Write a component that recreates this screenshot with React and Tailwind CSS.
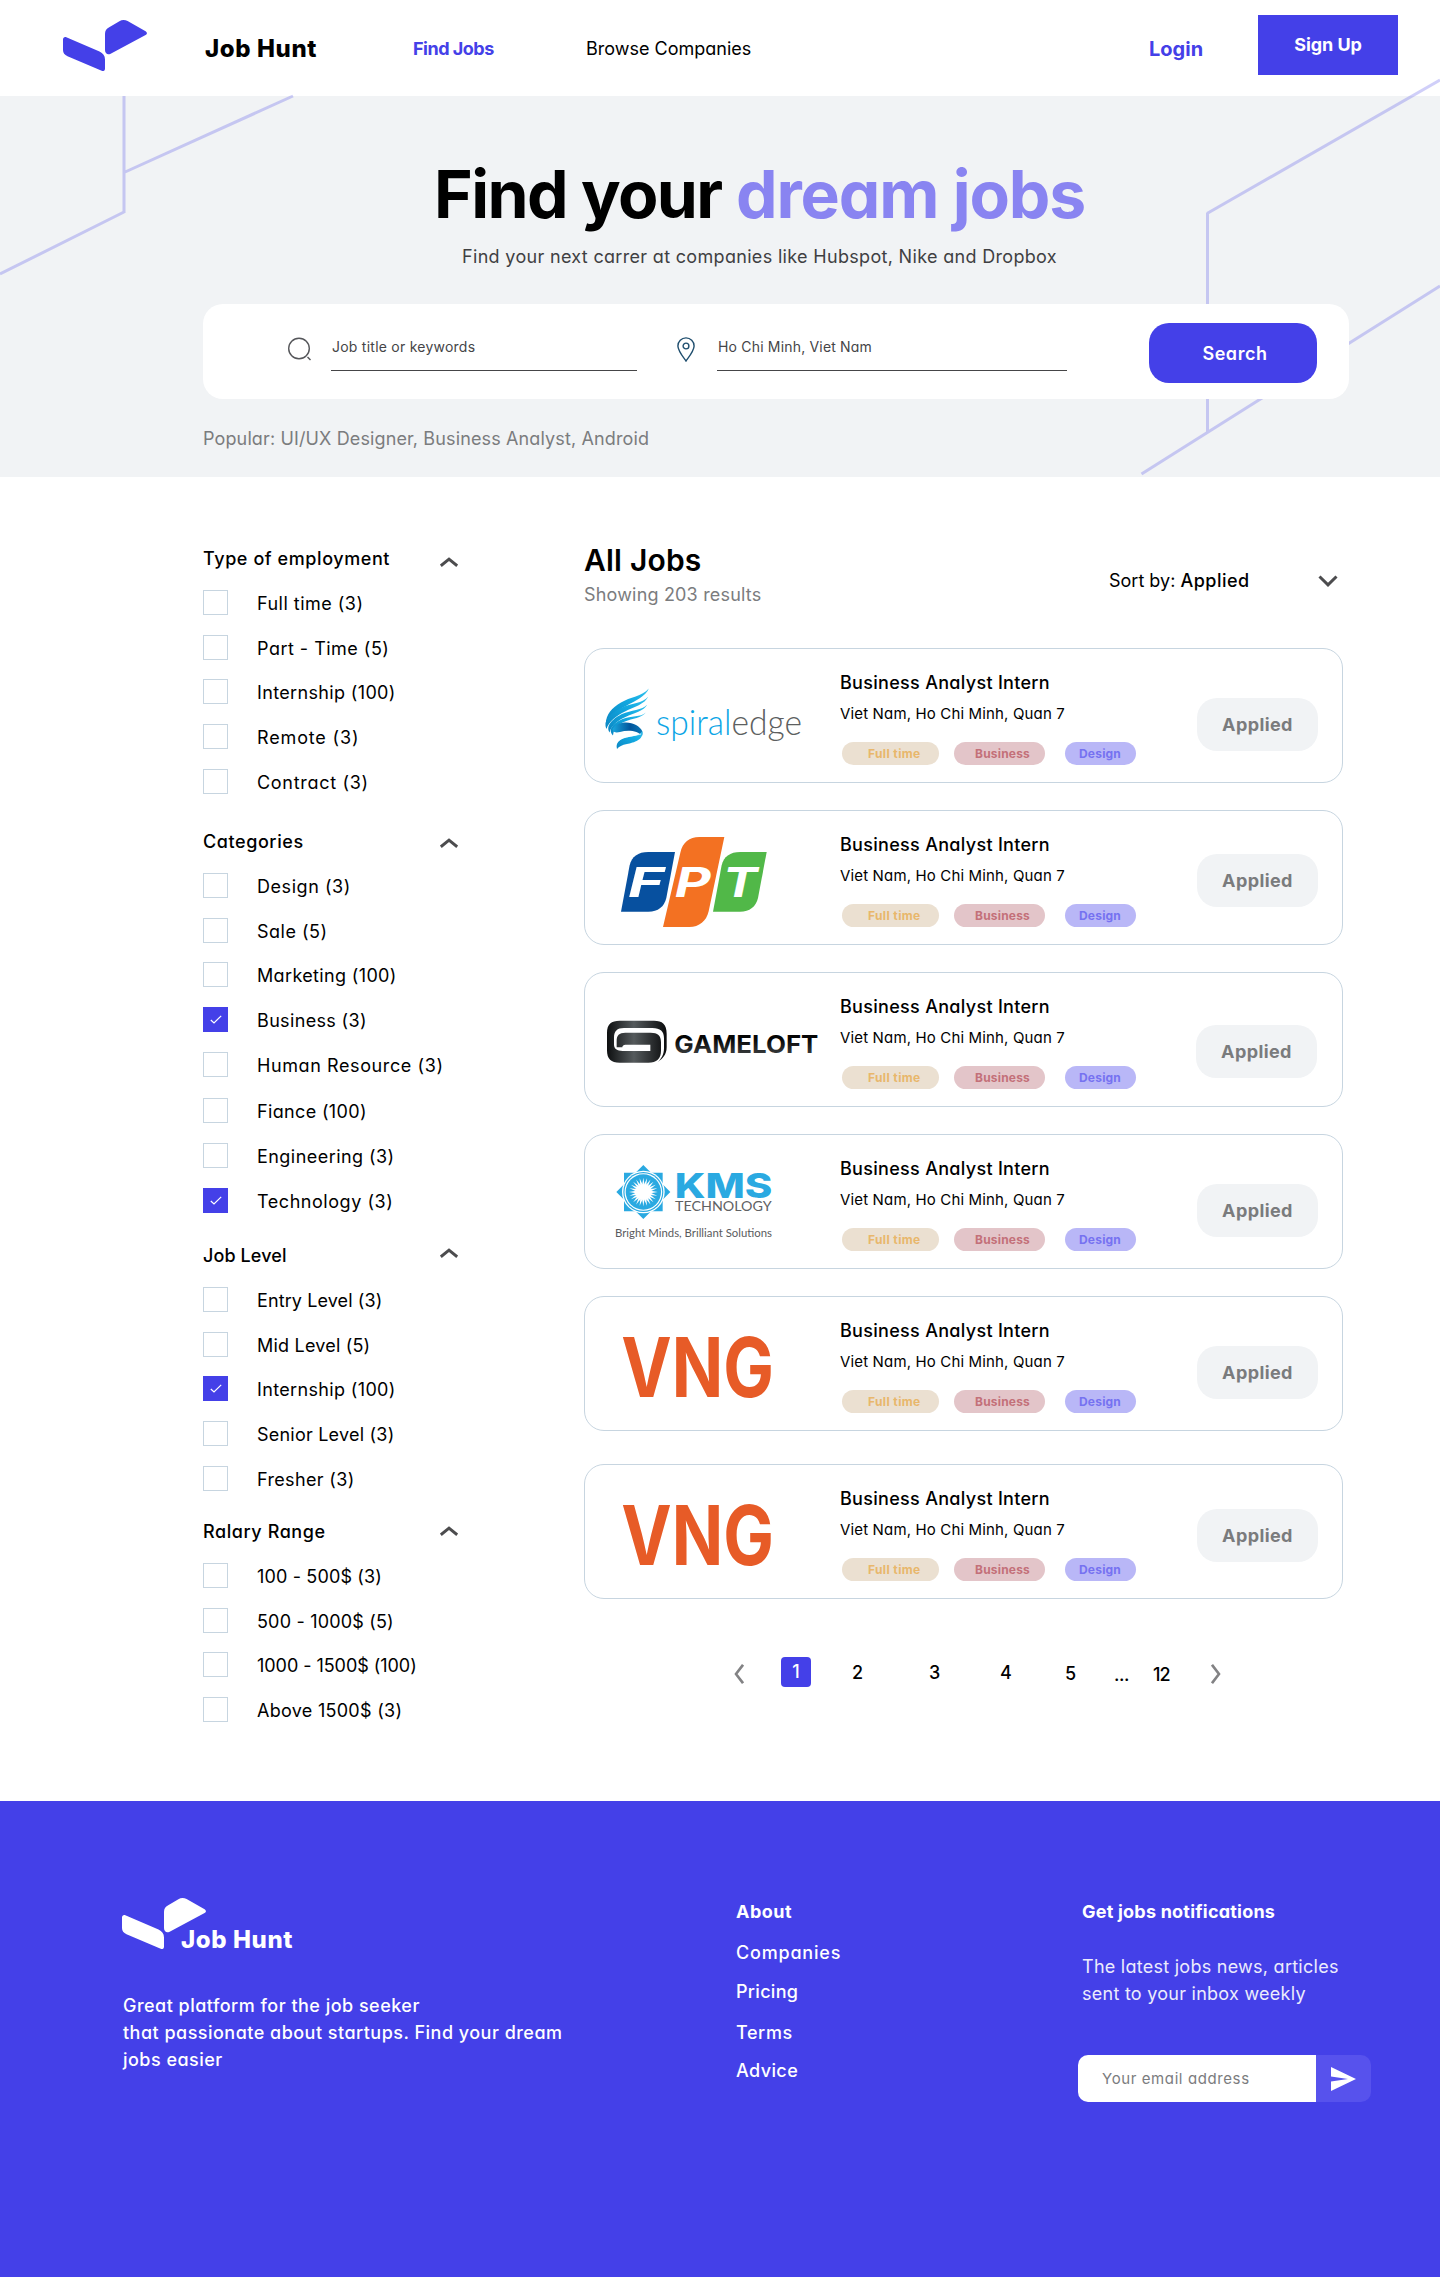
import React from "react";

const jobs = [
  { logo: "spiraledge", gap: "", button: "mt-[49px] ml-0" },
  { logo: "fpt", gap: "mt-[27px]", button: "mt-[43px] ml-0" },
  { logo: "gameloft", gap: "mt-[27px]", button: "mt-[52px] -ml-px" },
  { logo: "kms", gap: "mt-[27px]", button: "mt-[49px] ml-0" },
  { logo: "vng", gap: "mt-[27px]", button: "mt-[49px] ml-0" },
  { logo: "vng", gap: "mt-[33px]", button: "mt-[44px] ml-0" },
];

const groups = [
  {
    title: "Type of employment",
    chevron: "mt-[12px]",
    items: [
      { label: "Full time (3)", row: "h-[45px]", spacing: "tracking-[0.480px]" },
      { label: "Part - Time (5)", row: "h-[44px]", spacing: "tracking-[0.480px]" },
      { label: "Internship (100)", row: "h-[45px]" },
      { label: "Remote (3)", row: "h-[45px]", spacing: "tracking-[0.850px]" },
      { label: "Contract (3)", row: "h-[59px]", spacing: "tracking-[0.700px]" },
    ],
  },
  {
    title: "Categories",
    chevron: "mt-[10px]",
    items: [
      { label: "Design (3)", row: "h-[45px]", spacing: "tracking-[0.550px]" },
      { label: "Sale (5)", row: "h-[44px]", spacing: "tracking-[0.500px]" },
      { label: "Marketing (100)", row: "h-[45px]" },
      { label: "Business (3)", row: "h-[45px]", checked: true },
      { label: "Human Resource (3)", row: "h-[46px]", spacing: "tracking-[0.600px]" },
      { label: "Fiance (100)", row: "h-[45px]" },
      { label: "Engineering (3)", row: "h-[45px]", spacing: "tracking-[0.450px]" },
      { label: "Technology (3)", row: "h-[54px]", checked: true, spacing: "tracking-[0.550px]" },
    ],
  },
  {
    title: "Job Level",
    titleSpacing: "tracking-[0.100px]",
    chevron: "mt-[6px]",
    items: [
      { label: "Entry Level (3)", row: "h-[45px]", spacing: "tracking-[0.100px]" },
      { label: "Mid Level (5)", row: "h-[44px]", spacing: "tracking-[0.200px]" },
      { label: "Internship (100)", row: "h-[45px]", checked: true },
      { label: "Senior Level (3)", row: "h-[45px]", spacing: "tracking-[0.220px]" },
      { label: "Fresher (3)", row: "h-[52px]" },
    ],
  },
  {
    title: "Ralary Range",
    chevron: "mt-[8px]",
    items: [
      { label: "100 - 500$ (3)", row: "h-[45px]", spacing: "tracking-[0.150px]" },
      { label: "500 - 1000$ (5)", row: "h-[44px]", spacing: "tracking-[0.180px]" },
      { label: "1000 - 1500$ (100)", row: "h-[45px]", spacing: "tracking-[-0.050px]" },
      { label: "Above 1500$ (3)", row: "h-[45px]", spacing: "tracking-[0.280px]" },
    ],
  },
];

function BrandMark({ className }) {
  return (
    <svg viewBox="0 0 84 51" className={className} fill="currentColor">
      <path d="M0 19.5C0 17.6 1.6 16.4 3.3 17.2L36.5 31.4C40 33 42 35.5 42 39.5V48.5C42 50.6 40.5 51.6 38.7 50.8L4.5 36.2C1.5 34.8 0 33 0 30Z" />
      <path d="M42 14C42 10.5 43.3 8.8 46.2 7.2L56.4 1.2C59 -.3 62 -.3 64.6 1.1L82.6 11.2C84.4 12.3 84.4 14 82.6 15L47.2 33.9C44.4 35.3 42 33.2 42 30Z" />
    </svg>
  );
}

function Chevron({ className, d, box, width = 3 }) {
  return (
    <svg viewBox={box} className={className} fill="none" stroke="currentColor" strokeWidth={width}>
      <path d={d} />
    </svg>
  );
}

function SpiraledgeLogo() {
  return (
    <svg viewBox="1 1 255 133" className="h-[133px] w-[255px]">
      <defs>
        <linearGradient id="wing" x1="0" y1="1" x2="1" y2="0">
          <stop offset="0" stopColor="#0b86c3" />
          <stop offset="0.6" stopColor="#12a9e1" />
          <stop offset="1" stopColor="#35c3ee" />
        </linearGradient>
        <linearGradient id="band" x1="0" y1="0" x2="1" y2="0">
          <stop offset="0" stopColor="#1aa6de" />
          <stop offset="0.6" stopColor="#02559b" />
          <stop offset="1" stopColor="#0a78b8" />
        </linearGradient>
      </defs>
      <g fill="url(#wing)">
        <path d="M64.8 40.5C62 48 51 53 42 58C34 62 26 68 21.8 76C22 66 28 60 37 54.500C46 49 58 48.500 64.800 40.500Z" />
        <path d="M64.300 48.500C61 56 50 59 41 63.500C33 67.500 25 73 22.500 81C18.500 72 28 64.500 37 60C47 55 59 55.500 64.300 48.500Z" />
        <path d="M63.300 56.500C60 63 50 65 41.500 69C34 72.500 27.500 77 25.500 84.500C21 77 30 70 38 66C47 62 58 62.500 63.300 56.500Z" />
        <path d="M61.800 64.500C58 70 48 70.500 41 73.500C35 76 30 79 29 87.500C23 81 30.500 74.500 38.500 71C47 67.500 57 69.500 61.800 64.500Z" />
      </g>
      <path d="M28.500 81C33 73.500 45 73 52 77C58 80.500 59.500 84 58 88C54 82.500 44 81.500 36 84C32 85 29 84.500 28.500 81Z" fill="url(#band)" />
      <path d="M58.300 83C60 92 50 94.500 43 96C38 97 35 98.500 33 101C31.500 95 35 91.500 42 89.500C49 88 56 87.500 58.300 83Z" fill="url(#wing)" />
      <path d="M32.500 95C36 88.500 48 88.500 57 86" fill="none" stroke="#fff" strokeWidth=".8" />
      <text x="72" y="87" textLength="146" lengthAdjust="spacingAndGlyphs" className="fill-[#0ba5e6] font-['Lato'] text-[35px] font-light">
        spiral<tspan className="fill-[#5d5f61]">edge</tspan>
      </text>
    </svg>
  );
}

function FptLogo() {
  return (
    <svg viewBox="15 33 765 399" className="h-[133px] w-[255px]">
      <path d="M123 335L149 196C155 170 174 156 205 156H285L259 294C253 320 234 335 205 335Z" fill="#07509f" />
      <path d="M249 381L301 158C308 127 328 111 358 111H433L386 334C379 364 358 381 328 381Z" fill="#f37122" />
      <path d="M399 335L425 196C431 170 450 156 481 156H560L534 294C528 320 509 335 480 335Z" fill="#51b848" />
      <g className="fill-white font-['Inter'] text-[122px] font-bold italic">
        <text x="144" y="290" textLength="108" lengthAdjust="spacingAndGlyphs">F</text>
        <text x="284" y="290" textLength="108" lengthAdjust="spacingAndGlyphs">P</text>
        <text x="428" y="290" textLength="104" lengthAdjust="spacingAndGlyphs">T</text>
      </g>
    </svg>
  );
}

function GameloftLogo() {
  return (
    <svg viewBox="15 519 765 399" className="h-[133px] w-[255px]">
      <defs>
        <linearGradient id="steel" x1="0" y1="0" x2="1" y2="0">
          <stop offset="0" stopColor="#0d0f10" />
          <stop offset="0.45" stopColor="#555a5c" />
          <stop offset="1" stopColor="#0a0b0c" />
        </linearGradient>
        <linearGradient id="ink" x1="0" y1="0" x2="0" y2="1">
          <stop offset="0.3" stopColor="#050505" />
          <stop offset="1" stopColor="#4a4e50" />
        </linearGradient>
      </defs>
      <path
        d="M233 787C247 776 260 765 260 742V701C260 672 247 662 222 662H119C94 662 81 672 81 699V751C81 778 93 788 119 788H205C230 788 243 776 243 752V727C243 706 233 698 212 698H136C117 698 110 706 110 722V742H127C127 737 131 734 136 734H211V753H128C111 753 102 747 102 733V714C102 693 111 684 132 684H217C241 684 252 694 252 715V744C252 765 243 776 233 787Z"
        fill="url(#steel)"
        fillRule="evenodd"
      />
      <text x="283" y="760" textLength="432" lengthAdjust="spacingAndGlyphs" fill="url(#ink)" className="font-['Inter'] text-[72px] font-bold">
        GAMELOFT
      </text>
    </svg>
  );
}

function KmsLogo() {
  const rays = Array.from({ length: 24 }, (_, i) => i * 15);
  return (
    <svg viewBox="15 15 765 399" className="h-[133px] w-[255px]">
      <g transform="translate(190 186)">
        <path d="M-58-58H58V58H-58Z M0-81L81 0L0 81L-81 0Z" fill="#2aa9e1" />
        <circle r="64" fill="#fff" />
        <circle r="60" fill="#2aa9e1" />
        <circle r="56.500" fill="#fff" />
        <circle r="53" fill="#2aa9e1" />
        <circle r="24" fill="#fff" />
        {rays.map((angle) => (
          <path key={angle} d="M-3.500-22L0-43L3.500-22Z" fill="#fff" transform={`rotate(${angle})`} />
        ))}
      </g>
      <text x="284" y="204" textLength="293" lengthAdjust="spacingAndGlyphs" className="fill-[#2aa9e1] font-['Inter'] text-[102px] font-extrabold">
        KMS
      </text>
      <text x="285" y="244" textLength="290" lengthAdjust="spacingAndGlyphs" className="fill-[#606163] font-['Lato'] text-[38px]">
        TECHNOLOGY
      </text>
      <text x="105" y="321" textLength="471" lengthAdjust="spacingAndGlyphs" className="fill-[#5a5b5d] font-['Lato'] text-[37px]">
        Bright Minds, Brilliant Solutions
      </text>
    </svg>
  );
}

function VngLogo() {
  return (
    <svg viewBox="15 501 765 399" className="h-[133px] w-[255px]">
      <text x="124" y="801" textLength="458" lengthAdjust="spacingAndGlyphs" className="fill-[#e75b27] font-['Inter'] text-[247px] font-bold">
        VNG
      </text>
    </svg>
  );
}

const logos = {
  spiraledge: SpiraledgeLogo,
  fpt: FptLogo,
  gameloft: GameloftLogo,
  kms: KmsLogo,
  vng: VngLogo,
};

function Header() {
  return (
    <header className="flex h-24 items-start pl-[63px]">
      <BrandMark className="mt-5 h-[51px] w-[84px] shrink-0 text-[#4440e8]" />
      <div className="mt-[31px] ml-[58px] w-[208px] text-2xl leading-9 font-extrabold tracking-[0.600px]">Job Hunt</div>
      <nav className="mt-[35px] flex text-lg leading-[27px]">
        <a className="w-[173px] font-bold tracking-[-0.500px] text-[#4440e8]">Find Jobs</a>
        <a className="w-[563px]">Browse Companies</a>
      </nav>
      <a className="mt-[34px] w-[109px] text-xl leading-[30px] font-bold text-[#4440e8]">Login</a>
      <button className="mt-[15px] h-[60px] w-[140px] bg-[#4440e8] pb-[2px] text-lg leading-[27px] font-bold tracking-[-0.050px] text-white">Sign Up</button>
    </header>
  );
}

function Hero() {
  return (
    <section className="h-[381px] bg-[#f1f3f5]">
      <svg viewBox="0 0 1440 477" className="pointer-events-none absolute top-0 left-0 h-[477px] w-[1440px]" fill="none" stroke="#4440e8" strokeOpacity=".25" strokeWidth="3">
        <path d="M124 96V213M124 172.500L293 96M124 212L0 274" />
        <path d="M1207.500 213V432M1207 213.500L1440 80M1141.500 474L1440 286" />
      </svg>
      <h1 className="pt-[56px] pl-[434px] text-[66px] leading-[84px] font-bold whitespace-nowrap">
        <span className="inline-block w-[302px] tracking-[-1.600px]">Find your</span>
        <span className="tracking-[-1.150px] text-[#8984f1]">dream jobs</span>
      </h1>
      <p className="mt-[7px] pl-[462px] text-lg leading-[27px] tracking-[0.320px] text-[#3f4042]">
        Find your next carrer at companies like Hubspot, Nike and Dropbox
      </p>
      <div className="relative mt-[34px] ml-[203px] flex h-[95px] w-[1146px] items-start rounded-[20px] bg-white pl-[85px] text-sm leading-[21px] text-[#454547]">
        <svg viewBox="0 0 24 24" className="mt-[33px] h-6 w-6" fill="none" stroke="#55565a" strokeWidth="1.400">
          <circle cx="11" cy="11.500" r="10.300" />
          <path d="M19.500 20L22.500 23" />
        </svg>
        <div className="ml-[19px] h-[67px] w-[306px] border-b border-[#454547] pt-[32px] tracking-[0.240px]">
          <span className="pl-[1px]">Job title or keywords</span>
        </div>
        <svg viewBox="0 0 18 25" className="mt-[33px] ml-[40px] h-[25px] w-[18px]" fill="none" stroke="#1f4e6e" strokeWidth="1.400">
          <path d="M9 24C5 18.500 .9 13.500 .9 9A8.100 8.100 0 0 1 17.100 9C17.100 13.500 13 18.500 9 24Z" />
          <circle cx="9" cy="9" r="2.900" />
        </svg>
        <div className="ml-[22px] h-[67px] w-[350px] border-b border-[#454547] pt-[32px] tracking-[0.180px]">
          <span className="pl-[1px]">Ho Chi Minh, Viet Nam</span>
        </div>
        <button className="mt-[19px] ml-[82px] h-[60px] w-[168px] rounded-[20px] bg-[#4440e8] pt-[1px] pl-[4px] text-lg font-semibold tracking-[0.550px] text-white">Search</button>
      </div>
      <p className="mt-[26px] pl-[203px] text-lg leading-[27px] tracking-[0.130px] text-[#7b7c7e]">Popular: UI/UX Designer, Business Analyst, Android</p>
    </section>
  );
}

function Filters() {
  return (
    <aside className="w-[381px] shrink-0 pt-[68px] text-lg leading-[27px]">
      {groups.map((group) => (
        <section key={group.title}>
          <h2 className={`flex h-[45px] w-[255px] justify-between font-medium ${group.titleSpacing || "tracking-[0.580px]"}`}>
            {group.title}
            <Chevron box="0 0 18 10" d="M.8 8.800L9 2.200L17.200 8.800" className={`${group.chevron} h-[10px] w-[18px] text-[#4c4c4e]`} width={3} />
          </h2>
          {group.items.map((item) => (
            <label key={item.label} className={`${item.row} flex items-start`}>
              {item.checked ? (
                <span className="flex h-[25px] w-[25px] items-center justify-center bg-[#4440e8]">
                  <svg viewBox="0 0 12 9" className="h-[9px] w-3" fill="none" stroke="#fff" strokeWidth="1.200">
                    <path d="M.8 5L4 8L11.200 .8" />
                  </svg>
                </span>
              ) : (
                <span className="h-[25px] w-[25px] border border-[#c7d5e0] bg-white" />
              )}
              <span className={`ml-[29px] ${item.spacing || "tracking-[0.350px]"}`}>{item.label}</span>
            </label>
          ))}
        </section>
      ))}
    </aside>
  );
}

function JobCard({ job }) {
  const Logo = logos[job.logo];
  return (
    <article className={`${job.gap} flex h-[135px] w-[759px] items-start rounded-[20px] border border-[#c7d5e0]`}>
      <Logo />
      <div className="w-[357px] pt-5">
        <h3 className="text-lg leading-[27px] font-medium tracking-[0.300px]">Business Analyst Intern</h3>
        <p className="mt-[6px] text-[15px] leading-[23px] tracking-[0.150px]">Viet Nam, Ho Chi Minh, Quan 7</p>
        <div className="mt-[17px] flex pl-[2px] text-xs leading-[23px] font-bold">
          <span className="h-[23px] w-[97px] rounded-full bg-[#ebe0d1] pl-[26px] tracking-[0.380px] text-[#e8b76b]">Full time</span>
          <span className="ml-[15px] h-[23px] w-[91px] rounded-full bg-[#e3c5c9] pl-[21px] tracking-[0.200px] text-[#c37079]">Business</span>
          <span className="ml-5 h-[23px] w-[71px] rounded-full bg-[#b9b7f7] pl-[14px] tracking-[0.200px] text-[#7672f1]">Design</span>
        </div>
      </div>
      <button className={`${job.button} h-[53px] w-[121px] rounded-[20px] bg-[#f1f3f5] text-lg leading-[27px] font-bold tracking-[0.400px] text-[#7a7b7d]`}>Applied</button>
    </article>
  );
}

function Pagination() {
  return (
    <nav className="mt-[58px] flex items-start pl-[150px] text-lg leading-[27px] font-medium">
      <Chevron box="0 0 10 20" d="M9 .8L2 10L9 19.200" className="mt-[7px] h-5 w-[10px] text-[#828284]" width={2.600} />
      <span className="ml-[37px] h-[30px] w-[30px] rounded-[4px] bg-[#4440e8] text-center leading-[30px] text-white">1</span>
      <span className="ml-[41px] w-[77px] pt-[2px]">2</span>
      <span className="w-[71px] pt-[2px]">3</span>
      <span className="w-[65px] pt-[2px]">4</span>
      <span className="w-[49px] pt-[3px]">5</span>
      <span className="w-[39px] pt-[4px] tracking-[-0.500px]">...</span>
      <span className="w-[58px] pt-[4px] tracking-[-1px]">12</span>
      <Chevron box="0 0 10 20" d="M1 .8L8 10L1 19.200" className="mt-[7px] h-5 w-[10px] text-[#828284]" width={2.600} />
    </nav>
  );
}

function Results() {
  return (
    <main className="w-[759px] pt-[63px]">
      <div className="flex items-start">
        <div className="w-[525px]">
          <h2 className="text-[30px] leading-10 font-semibold tracking-[0.200px]">All Jobs</h2>
          <p className="mt-[1px] text-lg leading-[27px] tracking-[0.180px] text-[#7b7c7e]">Showing 203 results</p>
        </div>
        <button className="mt-[27px] flex w-[229px] items-start justify-between text-lg leading-[27px]">
          <span>
            Sort by: <span className="font-medium tracking-[0.500px]">Applied</span>
          </span>
          <Chevron box="0 0 20 12" d="M1.500 1.500L10 9.800L18.500 1.500" className="mt-[8px] h-3 w-5 text-[#4c4c4e]" />
        </button>
      </div>
      <div className="mt-10">
        {jobs.map((job, i) => (
          <JobCard key={i} job={job} />
        ))}
      </div>
      <Pagination />
    </main>
  );
}

function Footer() {
  return (
    <footer className="flex h-[476px] bg-[#4440e8] pl-[122px] text-lg leading-[27px] text-white">
      <div className="w-[614px] pt-[97px]">
        <div className="flex items-start">
          <BrandMark className="h-[51px] w-[84px]" />
          <span className="mt-[24px] -ml-[25px] text-2xl leading-9 font-extrabold tracking-[0.600px]">Job Hunt</span>
        </div>
        <p className="mt-[34px] w-[460px] pl-[1px] font-medium tracking-[0.480px]">
          Great platform for the job seeker
          <br />
          that passionate about startups. Find your dream jobs easier
        </p>
      </div>
      <div className="flex w-[342px] flex-col pt-[97px] font-medium">
        <h3 className="font-bold tracking-[0.500px]">About</h3>
        <a className="mt-[14px] tracking-[0.800px]">Companies</a>
        <a className="mt-[12px] tracking-[0.300px]">Pricing</a>
        <a className="mt-[14px] tracking-[0.600px]">Terms</a>
        <a className="mt-[11px] tracking-[0.400px]">Advice</a>
      </div>
      <div className="pt-[97px]">
        <h3 className="pl-[4px] font-bold tracking-[0.220px]">Get jobs notifications</h3>
        <p className="mt-[28px] w-[280px] pl-[4px] tracking-[0.260px] text-[#ececfc]">The latest jobs news, articles sent to your inbox weekly</p>
        <div className="mt-[48px] flex h-[47px]">
          <div className="w-[238px] rounded-l-[10px] bg-white pl-[24px] text-[15px] leading-[48px] tracking-[0.600px] text-[#7b7c7e]">Your email address</div>
          <button className="flex w-[55px] items-center justify-center rounded-r-[10px] bg-[#5752ed]">
            <svg viewBox="0 0 25 24" className="h-6 w-[25px]" fill="#fff">
              <path d="M0 0L25 12L0 24V14.500L17 12L0 9.500Z" />
            </svg>
          </button>
        </div>
      </div>
    </footer>
  );
}

export default function App() {
  return (
    <div className="relative w-[1440px] bg-white font-['Inter',sans-serif] text-black [font-feature-settings:'cv11']">
      <Header />
      <Hero />
      <div className="flex h-[1324px] pl-[203px]">
        <Filters />
        <Results />
      </div>
      <Footer />
    </div>
  );
}
